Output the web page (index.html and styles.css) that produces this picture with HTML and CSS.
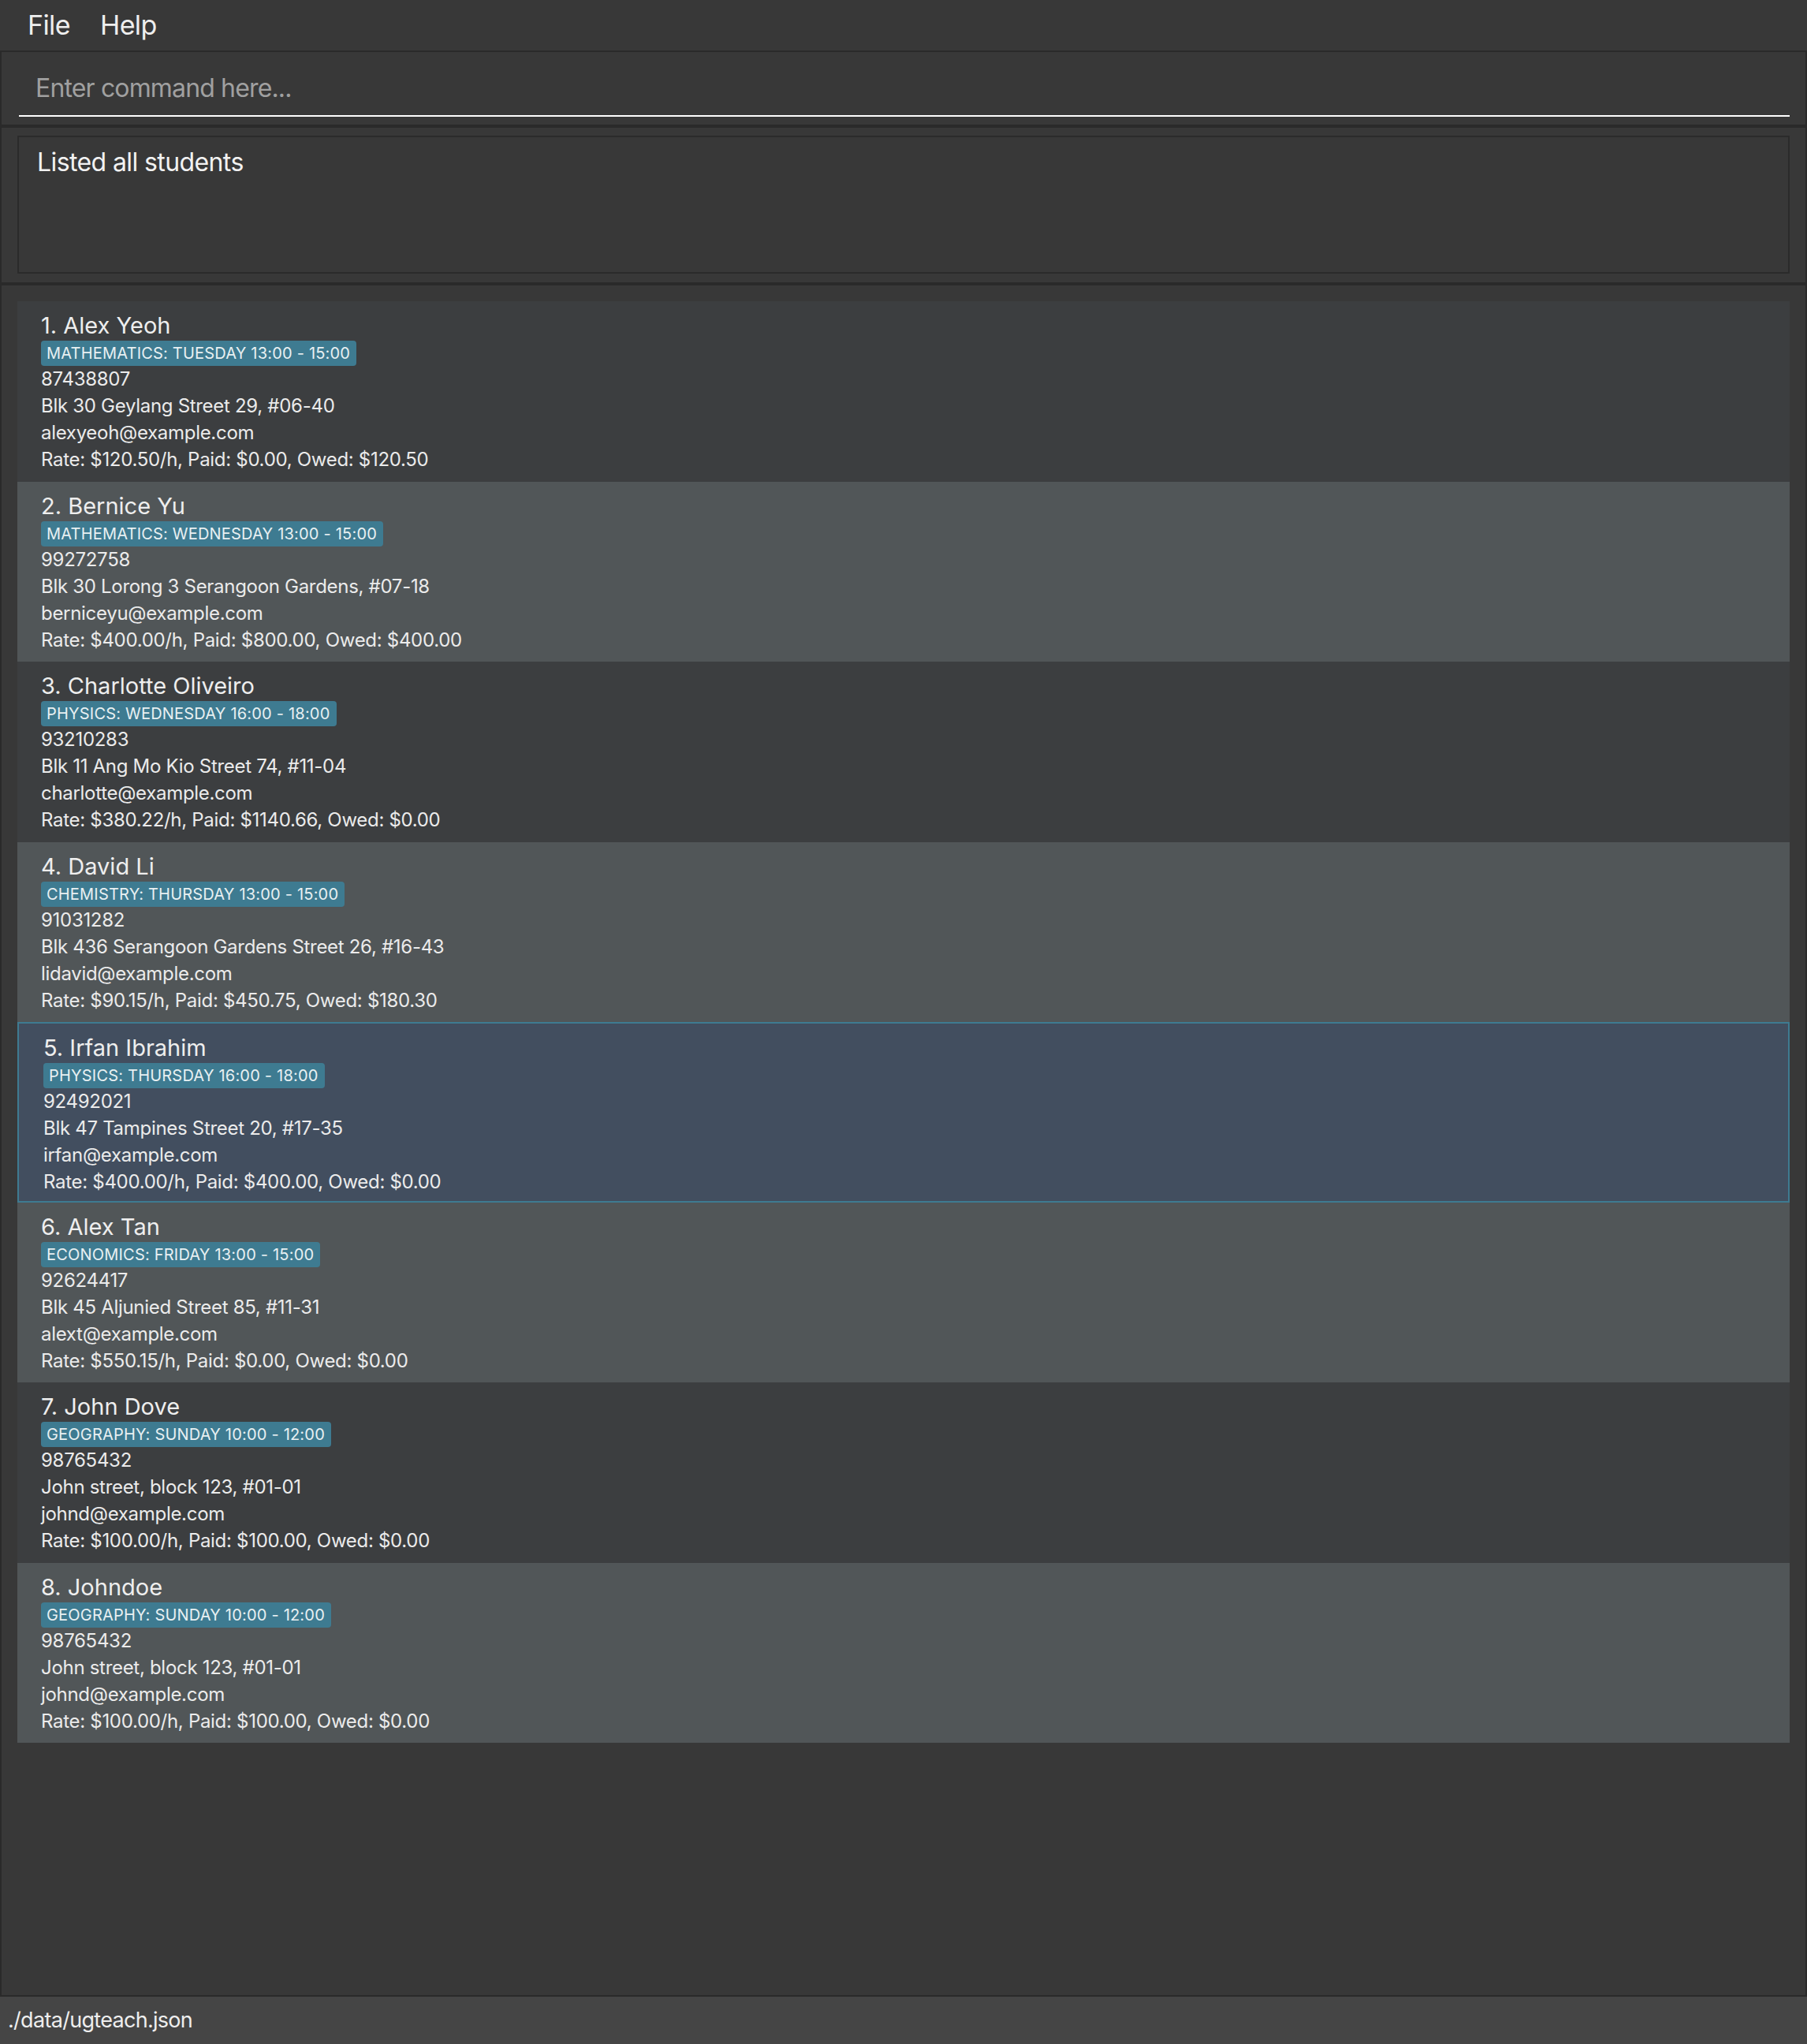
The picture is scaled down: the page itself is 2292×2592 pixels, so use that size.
FILE: index.html
```html
<!DOCTYPE html>
<html>
<head>
<meta charset="utf-8">
<link rel="stylesheet" href="styles.css">
</head>
<body>
<div class="app">
  <div class="menubar">
    <span class="menu-item">File</span>
    <span class="menu-item">Help</span>
  </div>
  <div class="panel command-panel">
    <div class="command-field">Enter command here...</div>
  </div>
  <div class="panel result-panel">
    <div class="result-box">Listed all students</div>
  </div>
  <div class="panel list-panel">
    <div class="card odd">
      <div class="name">1. Alex Yeoh</div>
      <div class="tags"><span class="tag">MATHEMATICS: TUESDAY 13:00 - 15:00</span></div>
      <div class="detail">87438807</div>
      <div class="detail">Blk 30 Geylang Street 29, #06-40</div>
      <div class="detail">alexyeoh@example.com</div>
      <div class="detail">Rate: $120.50/h, Paid: $0.00, Owed: $120.50</div>
    </div>
    <div class="card even">
      <div class="name">2. Bernice Yu</div>
      <div class="tags"><span class="tag">MATHEMATICS: WEDNESDAY 13:00 - 15:00</span></div>
      <div class="detail">99272758</div>
      <div class="detail">Blk 30 Lorong 3 Serangoon Gardens, #07-18</div>
      <div class="detail">berniceyu@example.com</div>
      <div class="detail">Rate: $400.00/h, Paid: $800.00, Owed: $400.00</div>
    </div>
    <div class="card odd">
      <div class="name">3. Charlotte Oliveiro</div>
      <div class="tags"><span class="tag">PHYSICS: WEDNESDAY 16:00 - 18:00</span></div>
      <div class="detail">93210283</div>
      <div class="detail">Blk 11 Ang Mo Kio Street 74, #11-04</div>
      <div class="detail">charlotte@example.com</div>
      <div class="detail">Rate: $380.22/h, Paid: $1140.66, Owed: $0.00</div>
    </div>
    <div class="card even">
      <div class="name">4. David Li</div>
      <div class="tags"><span class="tag">CHEMISTRY: THURSDAY 13:00 - 15:00</span></div>
      <div class="detail">91031282</div>
      <div class="detail">Blk 436 Serangoon Gardens Street 26, #16-43</div>
      <div class="detail">lidavid@example.com</div>
      <div class="detail">Rate: $90.15/h, Paid: $450.75, Owed: $180.30</div>
    </div>
    <div class="card selected">
      <div class="name">5. Irfan Ibrahim</div>
      <div class="tags"><span class="tag">PHYSICS: THURSDAY 16:00 - 18:00</span></div>
      <div class="detail">92492021</div>
      <div class="detail">Blk 47 Tampines Street 20, #17-35</div>
      <div class="detail">irfan@example.com</div>
      <div class="detail">Rate: $400.00/h, Paid: $400.00, Owed: $0.00</div>
    </div>
    <div class="card even">
      <div class="name">6. Alex Tan</div>
      <div class="tags"><span class="tag">ECONOMICS: FRIDAY 13:00 - 15:00</span></div>
      <div class="detail">92624417</div>
      <div class="detail">Blk 45 Aljunied Street 85, #11-31</div>
      <div class="detail">alext@example.com</div>
      <div class="detail">Rate: $550.15/h, Paid: $0.00, Owed: $0.00</div>
    </div>
    <div class="card odd">
      <div class="name">7. John Dove</div>
      <div class="tags"><span class="tag">GEOGRAPHY: SUNDAY 10:00 - 12:00</span></div>
      <div class="detail">98765432</div>
      <div class="detail">John street, block 123, #01-01</div>
      <div class="detail">johnd@example.com</div>
      <div class="detail">Rate: $100.00/h, Paid: $100.00, Owed: $0.00</div>
    </div>
    <div class="card even">
      <div class="name">8. Johndoe</div>
      <div class="tags"><span class="tag">GEOGRAPHY: SUNDAY 10:00 - 12:00</span></div>
      <div class="detail">98765432</div>
      <div class="detail">John street, block 123, #01-01</div>
      <div class="detail">johnd@example.com</div>
      <div class="detail">Rate: $100.00/h, Paid: $100.00, Owed: $0.00</div>
    </div>
  </div>
  <div class="status-bar">./data/ugteach.json</div>
</div>
</body>
</html>
```

FILE: styles.css
```css
* { box-sizing: border-box; }
html, body {
  margin: 0;
  padding: 0;
  background: #383838;
}
body {
  font-family: Inter, "Open Sans", sans-serif;
  color: #e8e8e8;
}
.app {
  width: 2292px;
  height: 2592px;
  display: flex;
  flex-direction: column;
}
.menubar {
  height: 64px;
  flex: none;
  display: flex;
  align-items: center;
  gap: 38px;
  padding-left: 35px;
  padding-bottom: 2px;
  background: #383838;
}
.menu-item {
  font-size: 34px;
  letter-spacing: -0.6px;
  color: #eeeeee;
}
.panel {
  border: 2px solid #2a2a2a;
  background: #383838;
  flex: none;
}
.command-panel {
  height: 96px;
  padding: 0 20px 10px 22px;
}
.command-field {
  padding: 26px 0 14px 21px;
  font-size: 32px;
  line-height: 40px;
  letter-spacing: -0.85px;
  color: #a0a0a0;
  border-bottom: 2px solid #ffffff;
}
.result-panel {
  height: 200px;
  padding: 10px 20px 11px 20px;
}
.result-box {
  height: 175px;
  border: 2px solid #2b2b2b;
  padding: 12px 0 0 23px;
  font-size: 32px;
  line-height: 40px;
  letter-spacing: -0.6px;
  color: #f2f2f2;
}
.list-panel {
  flex: 1;
  padding: 20px 20px 0 20px;
}
.card {
  height: 228.5px;
  padding: 14px 0 0 30px;
}
.card.odd { background: #3c3e40; }
.card.even { background: #515658; }
.card.selected {
  background: #424e5f;
  border: 2px solid #3e7b91;
  padding: 14px 0 0 31px;
}
.name {
  font-size: 29px;
  line-height: 34px;
  color: #eeeeee;
}
.tags {
  margin-top: 2px;
  display: flex;
}
.tag {
  font-size: 20px;
  line-height: 24px;
  letter-spacing: 0.2px;
  padding: 4px 8px 4px 7px;
  background: #3e7b91;
  border-radius: 4px;
  color: #e8f0f2;
}
.detail {
  font-size: 24px;
  line-height: 34px;
  letter-spacing: -0.3px;
  color: #ebebeb;
}
.status-bar {
  height: 60px;
  flex: none;
  background: #454545;
  padding-left: 10px;
  font-size: 27px;
  line-height: 60px;
  letter-spacing: -0.7px;
  color: #eeeeee;
}
```
